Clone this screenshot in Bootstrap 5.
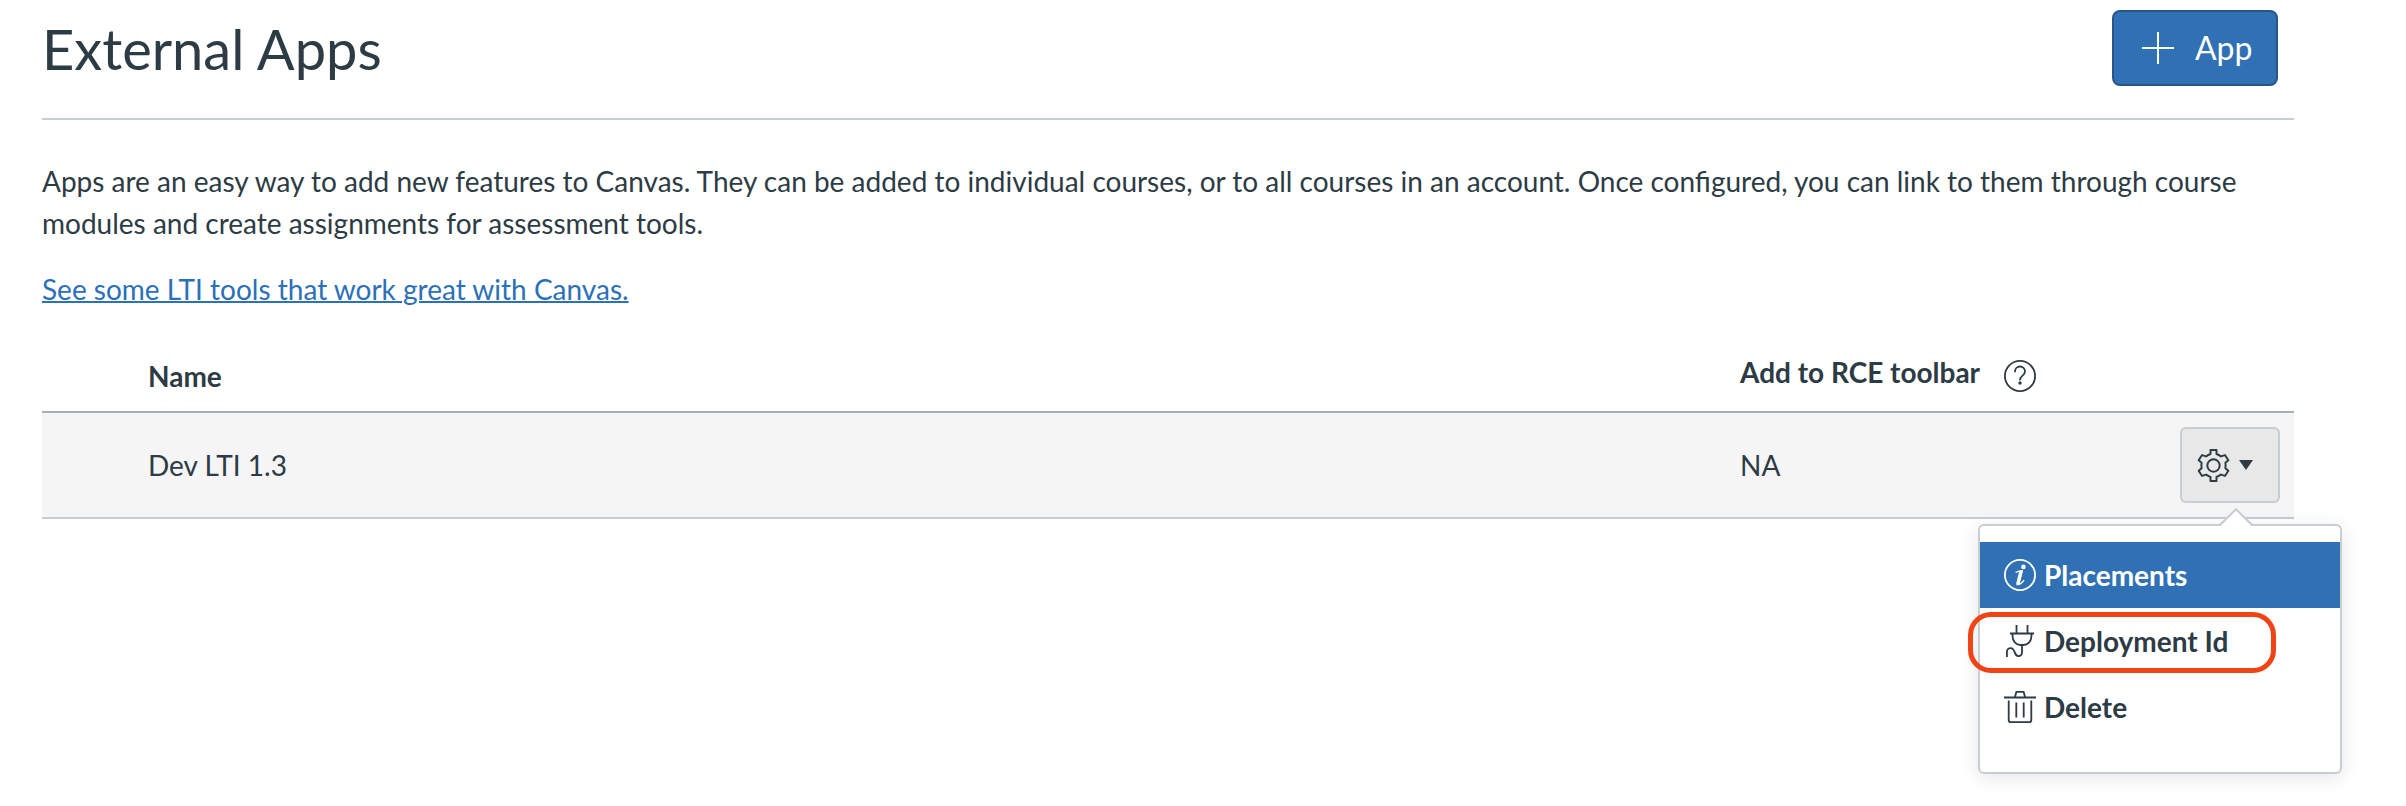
<!DOCTYPE html>
<html lang="en">
<head>
<meta charset="utf-8">
<title>External Apps</title>
<link href="https://cdn.jsdelivr.net/npm/bootstrap@5.3.0/dist/css/bootstrap.min.css" rel="stylesheet">
<style>
  body { font-family: Lato, "Liberation Sans", sans-serif; font-size: 28px; line-height: 42px; color: #2d3b45; background: #fff; }
  .page { width: 2252px; margin-left: 42px; }
  .page-head { height: 120px; border-bottom: 2px solid #c7cdd1; padding: 10px 16px 0 0; }
  .page-title { font-size: 56px; line-height: 84px; font-weight: 400; margin: -3px 0 0; color: inherit; }
  .btn-app { width: 166px; height: 76px; font-size: 32px; line-height: 48px; border: 2px solid #2a5587; border-radius: 8px; background: #3071b5; color: #fff; padding: 0 0 0 28px; gap: 21px; }
  .intro { margin: 40px 0 24px; }
  .lti-link { color: #2b70b9; text-decoration: underline; text-decoration-thickness: 2px; }
  .apps-table { table-layout: fixed; border-collapse: separate; border-spacing: 0; margin-top: 31px; width: 100%; }
  .apps-table th { height: 72px; padding: 14px 0 0; vertical-align: top; border-bottom: 2px solid #a5afb5; font-weight: 700; }
  .apps-table td { height: 106px; padding: 0; vertical-align: top; background: #f5f5f5; border-bottom: 2px solid #c7cdd1; }
  .apps-table td.cell-text { padding-top: 31px; }
  .col-lead { width: 106px; } .col-rce { width: 438px; } .col-act { width: 116px; }
  .rce-head { margin-top: -4px; gap: 24px; }
  .rce-head svg { margin-top: 9px; }
  .gear-wrap { width: 100px; margin: 14px 0 0 2px; }
  .btn-gear { width: 100px; height: 76px; border: 2px solid #c7cdd1; border-radius: 6px; background: #e8e8e8; color: #2d3b45; padding: 0 0 0 15px; gap: 9px; }
  .app-menu { position: absolute; top: 97px; right: -62px; width: 364px; height: 250px; font-size: 28px; padding: 16px 0; border: 2px solid #c7cdd1; border-radius: 6px; box-shadow: 0 4px 20px rgba(0,0,0,.1); color: #2d3b45; background: #fff; }
  .app-menu .dropdown-item { height: 66px; line-height: 42px; padding: 0 24px; gap: 8px; font-weight: 700; color: #2d3b45; }
  .app-menu .dropdown-item.active { background: #3071b5; color: #fff; }
  .menu-tip { position: absolute; top: -18px; right: 86px; }
  .callout { position: absolute; left: -12px; top: 86px; width: 308px; height: 61px; border: 5px solid #f04417; border-radius: 23px; }
  svg { flex: none; display: block; }
</style>
</head>
<body class="min-vh-100">
<main class="page min-vh-100">
  <header class="page-head d-flex justify-content-between align-items-start">
    <h1 class="page-title">External Apps</h1>
    <button class="btn btn-app d-flex align-items-center" type="button">
      <svg width="32" height="32" viewBox="0 0 32 32" fill="none" stroke="currentColor" stroke-width="2"><path d="M16 0v32M0 16h32"/></svg>
      <span>App</span>
    </button>
  </header>

  <p class="intro">Apps are an easy way to add new features to Canvas. They can be added to individual courses, or to all courses in an account. Once configured, you can link to them through course modules and create assignments for assessment tools.</p>
  <p class="mb-0"><a class="lti-link" href="#">See some LTI tools that work great with Canvas.</a></p>

  <table class="apps-table">
    <colgroup><col class="col-lead"><col><col class="col-rce"><col class="col-act"></colgroup>
    <thead>
      <tr>
        <th></th>
        <th>Name</th>
        <th>
          <div class="rce-head d-flex align-items-start">
            <span>Add to RCE toolbar</span>
            <svg width="32" height="32" viewBox="0 0 32 32" fill="none" stroke="currentColor" stroke-width="1.8"><circle cx="16" cy="16" r="15.1"/><path d="M11 12.3V11.5a5 5 0 0 1 10 0c0 2.3-1.3 3.3-2.7 4.4C17 17 16 18 16 20.3"/><circle cx="16" cy="23" r="1.7" fill="currentColor" stroke="none"/></svg>
          </div>
        </th>
        <th></th>
      </tr>
    </thead>
    <tbody>
      <tr>
        <td></td>
        <td class="cell-text">Dev LTI 1.3</td>
        <td class="cell-text">NA</td>
        <td>
          <div class="gear-wrap position-relative">
            <button class="btn btn-gear d-flex align-items-center" type="button" aria-label="Settings">
              <svg width="33" height="33" viewBox="0 0 32 32" fill="none" stroke="currentColor" stroke-width="1.9" stroke-linejoin="round"><path d="M13.1 1h5.8v3.8a11.6 11.6 0 0 1 4.3 2.4l3.900-1.300 3.300 5-2.900 2.500a10.500 10.500 0 0 1 0 5.200l2.900 2.500-3.300 5-3.900-1.300a11.600 11.600 0 0 1-4.300 2.400V31h-5.800v-3.800a11.600 11.600 0 0 1-4.300-2.400l-3.900 1.300-3.300-5 2.900-2.500a10.500 10.500 0 0 1 0-5.200l-2.900-2.500 3.300-5 3.900 1.300a11.600 11.600 0 0 1 4.300-2.400z"/><circle cx="16" cy="16" r="6"/></svg>
              <svg width="14" height="10" viewBox="0 0 14 10" fill="currentColor"><path d="M0 0h14L7 10z"/></svg>
            </button>
            <div class="dropdown-menu app-menu d-block">
              <svg class="menu-tip" width="36" height="19" viewBox="0 0 36 19"><path d="M0 19 2 18 18 1.500 34 18l2 1z" fill="#fff"/><path d="M1.500 17.500 18 1.300 34.500 17.500" fill="none" stroke="#c7cdd1" stroke-width="2"/></svg>
              <a class="dropdown-item active d-flex align-items-center" href="#">
                <svg width="32" height="32" viewBox="0 0 32 32"><circle cx="16" cy="16" r="15.100" fill="none" stroke="currentColor" stroke-width="1.800"/><circle cx="19.400" cy="7.900" r="2.300" fill="currentColor"/><path d="M11.600 13.500c2.500-1.400 4.300-1.800 6.600-1.800-.5 3.900-2 8-2.800 11.800-.2 1.200.1 1.600.7 1.400 1.500-.6 2.900-2 4-3.700" fill="none" stroke="currentColor" stroke-width="1.200"/><path d="M15.300 12h3.500l-2.900 11.300c-.3 1.300.1 2.100.8 1.800-1.300 1.300-3.800 1.800-4.400.3-.2-.7 0-1.500.3-2.500z" fill="currentColor"/></svg>
                <span>Placements</span>
              </a>
              <a class="dropdown-item d-flex align-items-center" href="#">
                <svg width="32" height="32" viewBox="0 0 32 32" fill="none" stroke="currentColor" stroke-width="1.800"><path d="M12.500 0v8.500M23.500 0v8.500M6 8.500h24M8.500 8.500v2c0 5.500 3.500 9.500 8 9.500h3c4.500 0 8-4 8-9.500v-2M18 20v7c0 2.600-1.500 4.100-3.700 4.100-4.700 0-2.600-8-7.500-8-2.500 0-3.900 1.700-3.900 4V32"/></svg>
                <span>Deployment Id</span>
              </a>
              <a class="dropdown-item d-flex align-items-center" href="#">
                <svg width="32" height="32" viewBox="0 0 32 32" fill="none" stroke="currentColor" stroke-width="1.800"><path d="M0 6.500h32M10.800 6.500l1.600-5.600h7.200l1.600 5.600M4.700 9.500v19.400c0 1.300.8 2.200 2.100 2.200h18.400c1.300 0 2.100-.9 2.100-2.200V9.500M12.300 11.500v15M19.700 11.500v15"/></svg>
                <span>Delete</span>
              </a>
              <div class="callout"></div>
            </div>
          </div>
        </td>
      </tr>
    </tbody>
  </table>
</main>
<script src="https://cdn.jsdelivr.net/npm/bootstrap@5.3.0/dist/js/bootstrap.bundle.min.js"></script>
</body>
</html>
